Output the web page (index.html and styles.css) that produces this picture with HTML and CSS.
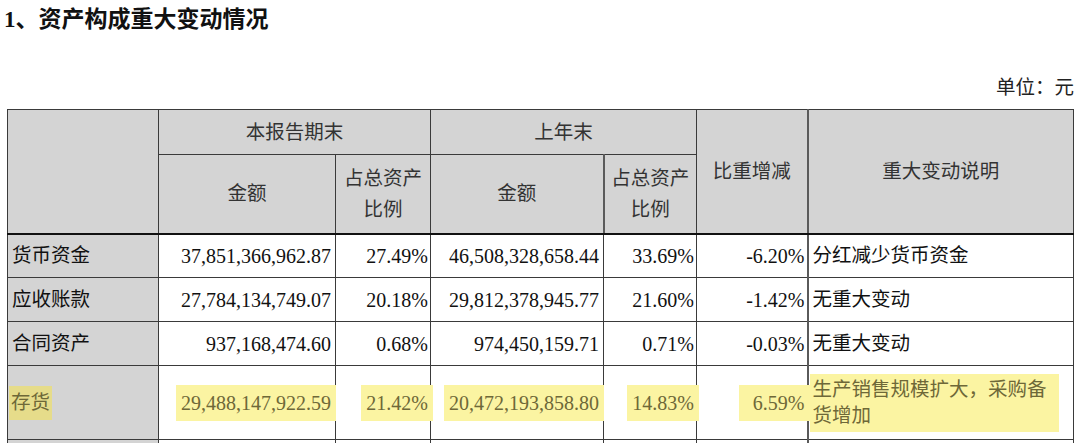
FILE: index.html
```html
<!DOCTYPE html>
<html lang="zh-CN">
<head>
<meta charset="utf-8">
<title>资产构成重大变动情况</title>
<link rel="stylesheet" href="styles.css">
</head>
<body>
<div class="page">
  <h1 class="title">1、资产构成重大变动情况</h1>
  <div class="unit">单位：元</div>
  <table class="assets">
    <colgroup>
      <col class="c-label">
      <col class="c-amt">
      <col class="c-pct">
      <col class="c-amt2">
      <col class="c-pct2">
      <col class="c-chg">
      <col class="c-note">
    </colgroup>
    <thead>
      <tr class="h1">
        <th rowspan="2"></th>
        <th colspan="2">本报告期末</th>
        <th colspan="2">上年末</th>
        <th rowspan="2">比重增减</th>
        <th rowspan="2">重大变动说明</th>
      </tr>
      <tr class="h2">
        <th>金额</th>
        <th>占总资产<br>比例</th>
        <th>金额</th>
        <th>占总资产<br>比例</th>
      </tr>
    </thead>
    <tbody>
      <tr class="row">
        <td class="label">货币资金</td>
        <td class="num">37,851,366,962.87</td>
        <td class="pct">27.49%</td>
        <td class="num">46,508,328,658.44</td>
        <td class="pct">33.69%</td>
        <td class="pct">-6.20%</td>
        <td class="note">分红减少货币资金</td>
      </tr>
      <tr class="row">
        <td class="label">应收账款</td>
        <td class="num">27,784,134,749.07</td>
        <td class="pct">20.18%</td>
        <td class="num">29,812,378,945.77</td>
        <td class="pct">21.60%</td>
        <td class="pct">-1.42%</td>
        <td class="note">无重大变动</td>
      </tr>
      <tr class="row">
        <td class="label">合同资产</td>
        <td class="num">937,168,474.60</td>
        <td class="pct">0.68%</td>
        <td class="num">974,450,159.71</td>
        <td class="pct">0.71%</td>
        <td class="pct">-0.03%</td>
        <td class="note">无重大变动</td>
      </tr>
      <tr class="row tall">
        <td class="label"><span class="hl hl-gray">存货</span></td>
        <td class="num"><span class="hl">29,488,147,922.59</span></td>
        <td class="pct"><span class="hl">21.42%</span></td>
        <td class="num"><span class="hl">20,472,193,858.80</span></td>
        <td class="pct"><span class="hl">14.83%</span></td>
        <td class="pct"><span class="hl hl-wide">6.59%</span></td>
        <td class="note"><div class="hl-block">生产销售规模扩大，采购备<br>货增加</div></td>
      </tr>
      <tr class="row">
        <td class="label"></td>
        <td class="num"></td>
        <td class="pct"></td>
        <td class="num"></td>
        <td class="pct"></td>
        <td class="pct"></td>
        <td class="note"></td>
      </tr>
    </tbody>
  </table>
</div>
</body>
</html>
```

FILE: styles.css
```css
html, body {
  margin: 0;
  padding: 0;
  background: #ffffff;
  overflow: hidden;
}

.page {
  width: 1080px;
  font-family: "Liberation Serif", "Noto Sans CJK SC", serif;
  color: #1e1e1e;
}

.title {
  margin: 0;
  padding-left: 4px;
  height: 40px;
  line-height: 40px;
  font-size: 23px;
  font-weight: bold;
  color: #111;
}

.unit {
  margin-top: 33px;
  height: 30px;
  line-height: 30px;
  text-align: right;
  padding-right: 6px;
  font-size: 19.5px;
  color: #222;
}

.assets {
  margin-top: 6px;
  margin-left: 7px;
  border-collapse: collapse;
  table-layout: fixed;
  width: 1066px;
}

.c-label { width: 151px; }
.c-amt { width: 177px; }
.c-pct { width: 95px; }
.c-amt2 { width: 173px; }
.c-pct2 { width: 93px; }
.c-chg { width: 111px; }
.c-note { width: 266px; }

.assets th,
.assets td {
  border: 1px solid #3a3a3a;
  padding: 0;
}

.assets th {
  background: #d4d4d4;
  font-weight: normal;
  font-size: 19.5px;
  line-height: 31px;
  color: #333;
  text-align: center;
  vertical-align: middle;
}

.assets thead tr.h1 { height: 45px; }
.assets thead tr.h2 { height: 79px; }

.assets thead tr.h2 th,
.assets thead tr.h1 th[rowspan] {
  border-bottom: 2px solid #111;
}

.assets th:last-child,
.assets td.note {
  border-left: 2px solid #5a5a5a;
}

.assets tbody tr.row { height: 44px; }
.assets tbody tr.tall { height: 74px; }

.assets td {
  font-size: 20px;
  line-height: 24px;
  vertical-align: middle;
  color: #111;
}

.assets td.label {
  background: #d4d4d4;
  font-size: 19.5px;
  padding-left: 4px;
}

.assets td.num {
  text-align: right;
  padding-right: 4px;
}

.assets td.pct {
  text-align: right;
  padding-right: 2px;
}

.assets td.note {
  font-size: 19.5px;
  padding-left: 4px;
  line-height: 26px;
}

.hl {
  display: inline-block;
  background: #fbf4a2;
  color: #6e6838;
  padding: 6px 5px;
  margin-right: -5px;
}

.hl-gray {
  background: #e6dc8a;
  padding: 5px 2px;
  margin-left: -3px;
}

.hl-wide {
  padding-left: 14px;
}

.hl-block {
  background: #fbf4a2;
  color: #6e6838;
  width: 246px;
  padding: 3px 0 3px 3px;
  margin-left: -3px;
}
```
